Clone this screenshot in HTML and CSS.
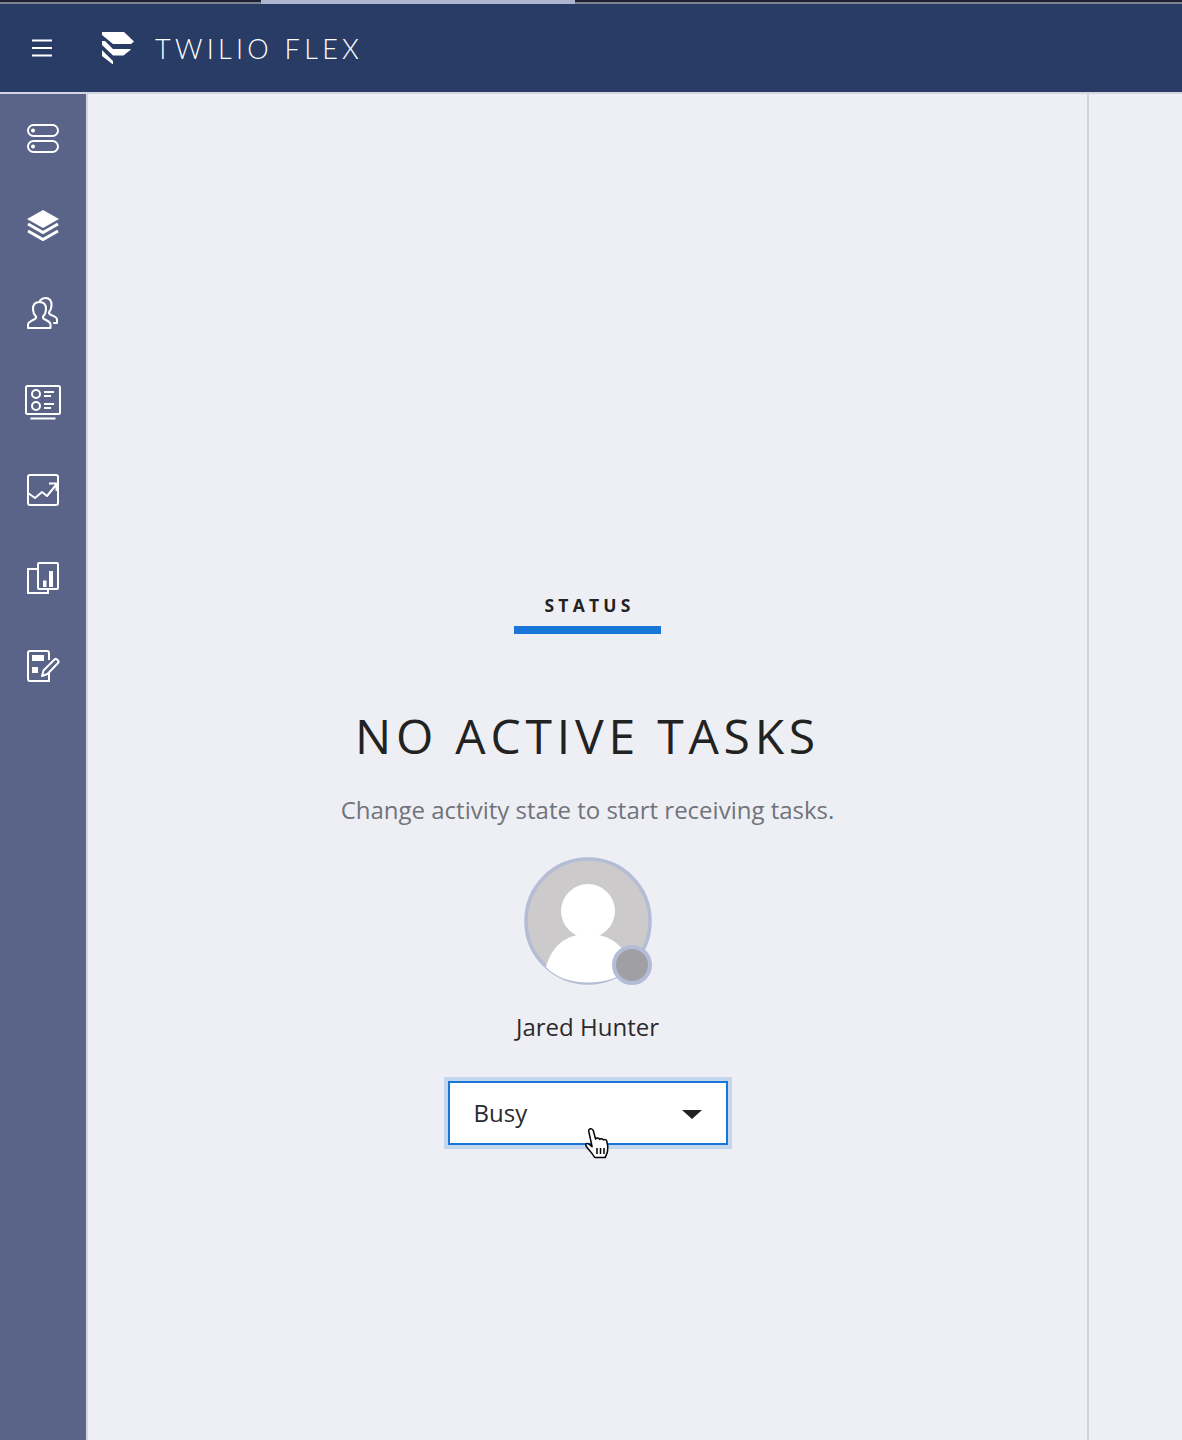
FILE: index.html
```html
<!DOCTYPE html>
<html lang="en">
<head>
<meta charset="utf-8">
<title>Twilio Flex</title>
<link rel="stylesheet" href="styles.css">
</head>
<body>
<div class="app">
  <div class="strip"><div class="strip-tab"></div></div>
  <header class="topbar">
    <svg class="burger" width="20" height="18" viewBox="0 0 20 18"><path d="M0 1.5h20M0 9h20M0 16.500h20" stroke="#fff" stroke-width="2" fill="none"/></svg>
    <svg class="logo" width="32" height="32" viewBox="0 0 32 32"><path fill="#fff" d="M0 0h22l10 9.500-3 2.500H12l-1 0L0 3zM0 9l3 0 8 8h17l1 .5-7.500 6H11L0 13zM0 18l11 11v3.500L9 31 0 24z"/><path fill="#fff" d="M0 14l11 11v7l-2-1-9-8z" opacity="0"/></svg>
    <span class="brand">TWILIO FLEX</span>
  </header>
  <div class="body">
    <nav class="sidebar">
      <div class="nav-item"><svg width="34" height="30" viewBox="0 0 34 30" fill="none" stroke="#fff" stroke-width="2"><rect x="2" y="2" width="30" height="11" rx="5.500"/><rect x="2" y="18" width="30" height="11" rx="5.500"/><circle cx="7" cy="7.500" r="2" fill="#fff" stroke="none"/><circle cx="7" cy="23.500" r="2" fill="#fff" stroke="none"/></svg></div>
      <div class="nav-item"><svg width="34" height="34" viewBox="0 0 34 34"><path fill="#fff" d="M17 1l16 9-16 9-16-9z"/><path fill="none" stroke="#fff" stroke-width="3" d="M2 15l15 8.500L32 15M2 22l15 8.500L32 22"/></svg></div>
      <div class="nav-item"><svg width="34" height="34" viewBox="0 0 34 34" fill="none" stroke="#fff" stroke-width="2" stroke-linejoin="round" stroke-linecap="round"><path d="M2 31v-3.500c0-2 2-3 5-4.500 2.500-1 3.500-2 3-3.500-2-2-3-4.500-3-7.500 0-4.500 2.500-7 6.500-7s6.500 2.500 6.500 7c0 3-1 5.500-3 7.500-.5 1.500.5 2.500 3 3.500 3 1.500 4.500 2.500 4.500 4.500V31z"/><path d="M14 3.500C15.500 1.800 17 1 19.500 1c4 0 6 2.600 6 7 0 3-1 5.500-2.500 7-.5 1.300.5 2.300 3 3.400 3 1.300 5 2 5 4.100V26h-3"/></svg></div>
      <div class="nav-item"><svg width="38" height="36" viewBox="0 0 38 36" fill="none" stroke="#fff" stroke-width="2"><rect x="2" y="2" width="34" height="28" rx="1.500"/><circle cx="12" cy="10" r="4"/><circle cx="12" cy="22" r="4"/><path d="M20 8h10M20 12h7M20 20h10M20 24h7M6.500 34.500h25"/></svg></div>
      <div class="nav-item"><svg width="34" height="34" viewBox="0 0 34 34" fill="none" stroke="#fff" stroke-width="2"><rect x="2" y="2" width="30" height="30" rx="2"/><path d="M2 20l7 5 7-6 5 4 9-11M23 10.500h7.500V18" stroke-linejoin="round"/></svg></div>
      <div class="nav-item"><svg width="34" height="34" viewBox="0 0 34 34" fill="none" stroke="#fff" stroke-width="2"><rect x="12" y="2" width="20" height="26" rx="1"/><path d="M12 8H2v24h20v-4"/><path d="M17 19.500h3.500V26H17zM23 10h4v16h-4z" fill="#fff" stroke="none"/></svg></div>
      <div class="nav-item"><svg width="34" height="34" viewBox="0 0 34 34" fill="none" stroke="#fff" stroke-width="2"><path d="M23 11V4a2 2 0 0 0-2-2H4a2 2 0 0 0-2 2v26a2 2 0 0 0 2 2h19v-8"/><path d="M6 6h12v6H6zM6 18h6v6H6z" fill="#fff" stroke="none"/><path d="M16 27l1.500-5.500L28.500 10.500a1.800 1.800 0 0 1 2.500 0l1 1a1.800 1.800 0 0 1 0 2.500L21.500 25z" stroke-linejoin="round"/></svg></div>
    </nav>
    <main class="content">
      <div class="tab"><span class="tab-label">STATUS</span></div>
      <h1 class="title">NO ACTIVE TASKS</h1>
      <p class="subtitle">Change activity state to start receiving tasks.</p>
      <div class="avatar">
        <svg class="avatar-img" width="128" height="128" viewBox="0 0 128 128"><circle cx="64" cy="64" r="62" fill="#cccaca" stroke="#b4bcd6" stroke-width="3.500"/><circle cx="64" cy="54" r="27" fill="#fff"/><path fill="#fff" d="M22 110c5-19 18-33 42-33s38 14 44 33c-10 10-26 15.500-44 15.500s-32-5-42-15.500z"/></svg>
        <span class="presence"></span>
      </div>
      <div class="agent">Jared Hunter</div>
      <div class="select">
        <span class="select-value">Busy</span>
        <span class="caret"></span>
        <svg class="hand" width="32" height="38" viewBox="0 0 32 38"><path fill="#fff" stroke="#000" stroke-width="1.500" stroke-linejoin="round" d="M5 2.500c1.800-1.500 3.700-.6 4.300 1.300l2.300 8.200c1.200-1.400 3.300-1.100 4 .4 1.100-1.100 3-.8 3.800.6 1.100-.8 2.800-.5 3.300.9 1 2.800 1.500 7 .8 10.600-.5 2.500-1.700 3.900-2.200 6H10.800c-1.300-2.300-3.400-5-6.300-8.300-1.500-1.700-3-3.300-2.800-4.500.3-1.400 2.100-1.500 3.400-.5l3 2.500L5 5.500c-.3-1.200-.6-2.300 0-3z"/><path d="M13 21v6M16.500 21v6M20 21v6" stroke="#000" stroke-width="1.500" fill="none"/></svg>
      </div>
    </main>
    <aside class="rightpane"></aside>
  </div>
</div>
</body>
</html>
```
FILE: styles.css
```css
* { box-sizing: border-box; }
html, body { margin: 0; padding: 0; }
body { font-family: "Open Sans", "Liberation Sans", sans-serif; background: #eeeff4; color: #222; }
.app { width: 1182px; height: 1440px; display: flex; flex-direction: column; overflow: hidden; }
.strip { height: 4px; flex: none; background: linear-gradient(#1b2033 0 2px, #80838f 2px 4px); padding-left: 261px; }
.strip-tab { width: 314px; height: 4px; background: #aeb5cf; }
.topbar { height: 90px; flex: none; background-color: #283c66; border-bottom: 2px solid #d3d6e2; display: flex; align-items: center; padding-left: 32px; padding-bottom: 0; }
.burger { flex: none; }
.logo { flex: none; margin-left: 50px; margin-top: -1px; }
.brand { margin-left: 21px; font-family: Lato, "Open Sans", sans-serif; font-weight: 300; font-size: 27px; letter-spacing: 4.300px; color: #fff; white-space: nowrap; }
.body { flex: 1; display: flex; min-height: 0; }
.sidebar { width: 88px; flex: none; background: #5a6488; border-right: 2px solid #d3d6e2; display: flex; flex-direction: column; padding-top: 0; }
.nav-item { height: 88px; display: flex; align-items: center; justify-content: center; }
.content { width: 1001px; flex: none; border-right: 2px solid #cfd2de; display: flex; flex-direction: column; align-items: center; padding-top: 499px; }
.rightpane { flex: 1; }
.tab { width: 147px; height: 41px; border-bottom: 8px solid #1976d9; text-align: center; }
.tab-label { display: block; font-size: 17.500px; font-weight: 700; letter-spacing: 4.200px; line-height: 24px; margin-top: 0; margin-right: -4px; color: #222; }
.title { margin: 68px 0 0; font-size: 48px; font-weight: 400; letter-spacing: 4.800px; line-height: 68px; color: #222; white-space: nowrap; }
.subtitle { margin: 22px 0 0; font-size: 24px; line-height: 36px; color: #71737b; font-weight: 400; }
.avatar { position: relative; width: 128px; height: 128px; margin-top: 29px; }
.avatar-img { display: block; }
.presence { position: absolute; left: 88px; top: 88px; width: 40px; height: 40px; border-radius: 50%; background: #a0a0a4; border: 4px solid #b4bcd6; }
.agent { margin-top: 24px; font-size: 24px; line-height: 36px; color: #2a2a2e; }
.select { position: relative; margin-top: 32px; width: 288px; height: 72px; border: 4px solid #c5d6ef; background-clip: padding-box; }
.select::before { content: ""; position: absolute; inset: 0; border: 2px solid #1976d9; background: #fff; }
.select-value { position: absolute; left: 26px; top: 14px; font-size: 24px; line-height: 36px; color: #2a2a2e; }
.caret { position: absolute; left: 234px; top: 29px; width: 0; height: 0; border-left: 10px solid transparent; border-right: 10px solid transparent; border-top: 9px solid #222; }
.hand { position: absolute; left: 136px; top: 46px; }
```
